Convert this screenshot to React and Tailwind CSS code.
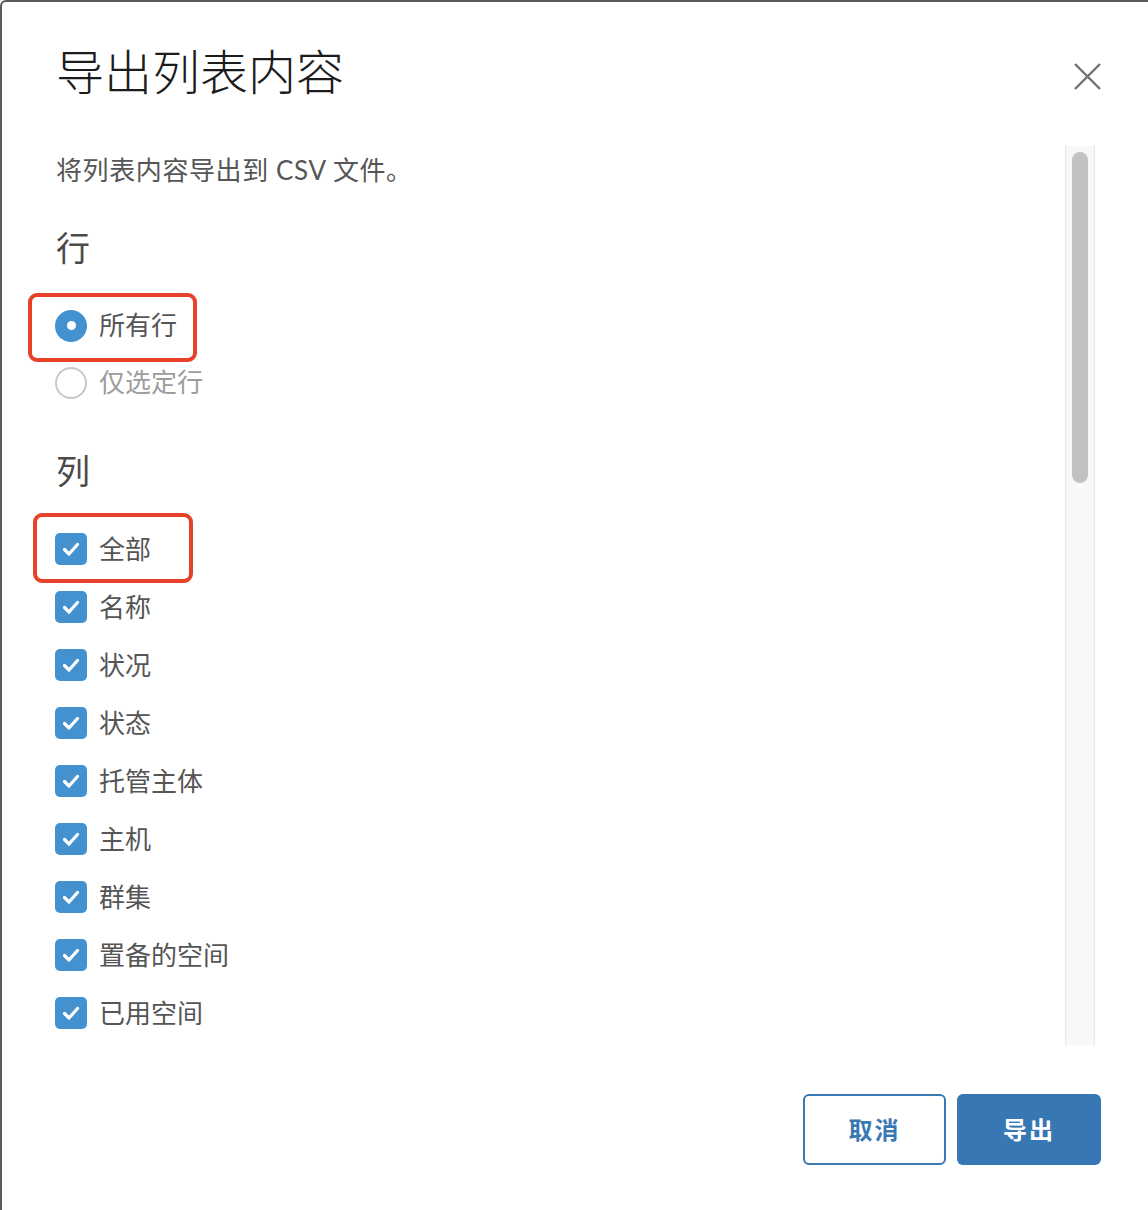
import React from 'react'

const columns = ['全部', '名称', '状况', '状态', '托管主体', '主机', '群集', '置备的空间', '已用空间']

const Check = () => (
  <span className="flex h-[32px] w-[32px] shrink-0 items-center justify-center rounded-[5px] bg-[#4392cf]">
    <svg width="32" height="32" viewBox="0 0 32 32" fill="none">
      <path d="M9.5 16.5 L14 21 L22.5 11.5" stroke="#fff" strokeWidth="3.2" strokeLinecap="round" strokeLinejoin="round" />
    </svg>
  </span>
)

const Radio = ({ checked }) =>
  checked ? (
    <span className="flex h-[32px] w-[32px] shrink-0 items-center justify-center rounded-full bg-[#4392cf]">
      <span className="h-[9px] w-[9px] rounded-full bg-white" />
    </span>
  ) : (
    <span className="h-[32px] w-[32px] shrink-0 rounded-full border-2 border-[#c8c8c8] bg-white" />
  )

const App = () => {
  return (
    <div className="flex h-[1210px] w-[1148px] flex-col overflow-hidden rounded-tl-[6px] border-l-2 border-t-2 border-[#5a5a5a] bg-white font-['Lato','Noto_Sans_CJK_SC',sans-serif]">
      {/* header */}
      <div className="flex h-[144px] shrink-0 items-start justify-between pl-[54px] pr-[46px]">
        <h1 className="pt-[46px] text-[48px] font-light leading-none text-[#1c1c1c]">导出列表内容</h1>
        <button className="mt-[60px]">
          <svg width="29" height="29" viewBox="0 0 29 29" fill="none">
            <path d="M2 2 L27 27 M27 2 L2 27" stroke="#707070" strokeWidth="2.4" />
          </svg>
        </button>
      </div>

      {/* body */}
      <div className="flex h-[899px] shrink-0 pl-[53px] pr-[53px]">
        <div className="flex-1 text-[#565656]">
          <div className="flex h-[48px] items-center pl-[1px] text-[26px] tracking-[0.6px]">将列表内容导出到 CSV 文件。</div>

          <div className="mt-[24px] flex h-[58px] items-center pl-[1px] text-[34px] text-[#4a4a4a]">行</div>

          <div className="mt-[21px]">
            <div className="relative flex h-[57px] items-center gap-[12px] text-[26px] text-[#555]">
              <Radio checked />
              <span>所有行</span>
              <div className="absolute left-[-27px] top-[-4px] h-[69px] w-[169px] rounded-[9px] border-4 border-[#e8412a]" />
            </div>
            <div className="flex h-[57px] items-center gap-[12px] text-[26px] text-[#9c9c9c]">
              <Radio />
              <span>仅选定行</span>
            </div>
          </div>

          <div className="mt-[30px] flex h-[58px] items-center pl-[1px] text-[34px] text-[#4a4a4a]">列</div>

          <div className="mt-[21px]">
            {columns.map((c, i) => (
              <div key={c} className="relative flex h-[58px] items-center gap-[12px] text-[26px] text-[#555]">
                <Check />
                <span>{c}</span>
                {i === 0 && (
                  <div className="absolute left-[-22px] top-[-7px] h-[70px] w-[160px] rounded-[9px] border-4 border-[#e8412a]" />
                )}
              </div>
            ))}
          </div>
        </div>

        {/* scroll track */}
        <div className="flex w-[30px] shrink-0 justify-center border-x border-[#e8e8e8] bg-[#f8f8f8] pt-[6px]">
          <div className="h-[331px] w-[16px] rounded-full bg-[#c2c2c2]" />
        </div>
      </div>

      {/* footer */}
      <div className="flex justify-end gap-[11px] pr-[47px] pt-[49px]">
        <button className="flex h-[71px] w-[143px] items-center justify-center rounded-[6px] border-2 border-[#3a78b3] bg-white text-[24px] font-bold tracking-[2px] text-[#3a78b3]">
          取消
        </button>
        <button className="flex h-[71px] w-[144px] items-center justify-center rounded-[6px] bg-[#3778b4] text-[24px] font-bold tracking-[2px] text-white">
          导出
        </button>
      </div>
    </div>
  )
}

export default App
